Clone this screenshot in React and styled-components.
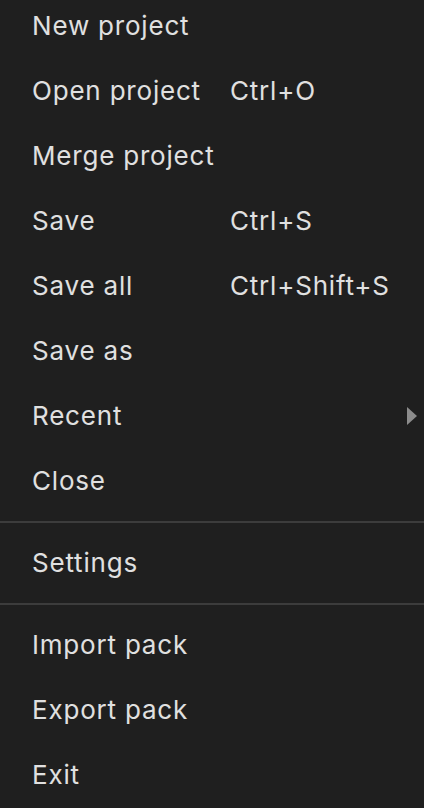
import React from "react";
import styled, { createGlobalStyle } from "styled-components";

const Global = createGlobalStyle`
  html, body { margin: 0; padding: 0; background: #1f1f1f; }
  body { font-family: Inter, "Noto Sans", sans-serif; }
`;

const Menu = styled.div`
  width: 424px;
  min-height: 808px;
  background: #1f1f1f;
  overflow: hidden;
`;

const List = styled.ul`
  list-style: none;
  margin: -7px 0 0;
  padding: 0;
`;

const Item = styled.li`
  display: grid;
  grid-template-columns: 198px 1fr 10px;
  align-items: center;
  height: 65px;
  padding: 0 7px 0 32px;
  color: #e0e0e0;
  font-size: 26px;
  font-weight: 400;
  letter-spacing: 0.8px;
  line-height: 65px;
  white-space: nowrap;
  cursor: default;
`;

const Label = styled.span``;
const Shortcut = styled.span``;

const Arrow = styled.span`
  width: 0;
  height: 0;
  border-top: 9px solid transparent;
  border-bottom: 9px solid transparent;
  border-left: 10px solid #8c8c8c;
`;

const Separator = styled.li`
  height: 2px;
  margin: 8px 0 7px;
  background: #3c3c3c;
`;

const groups = [
  [
    { label: "New project" },
    { label: "Open project", shortcut: "Ctrl+O" },
    { label: "Merge project" },
    { label: "Save", shortcut: "Ctrl+S" },
    { label: "Save all", shortcut: "Ctrl+Shift+S" },
    { label: "Save as" },
    { label: "Recent", submenu: true },
    { label: "Close" },
  ],
  [{ label: "Settings" }],
  [{ label: "Import pack" }, { label: "Export pack" }, { label: "Exit" }],
];

export default function App() {
  return (
    <Menu>
      <Global />
      <List>
        {groups.map((g, gi) => (
          <React.Fragment key={gi}>
            {gi > 0 && <Separator />}
            {g.map((it) => (
              <Item key={it.label}>
                <Label>{it.label}</Label>
                <Shortcut>{it.shortcut || ""}</Shortcut>
                {it.submenu ? <Arrow /> : <span />}
              </Item>
            ))}
          </React.Fragment>
        ))}
      </List>
    </Menu>
  );
}
